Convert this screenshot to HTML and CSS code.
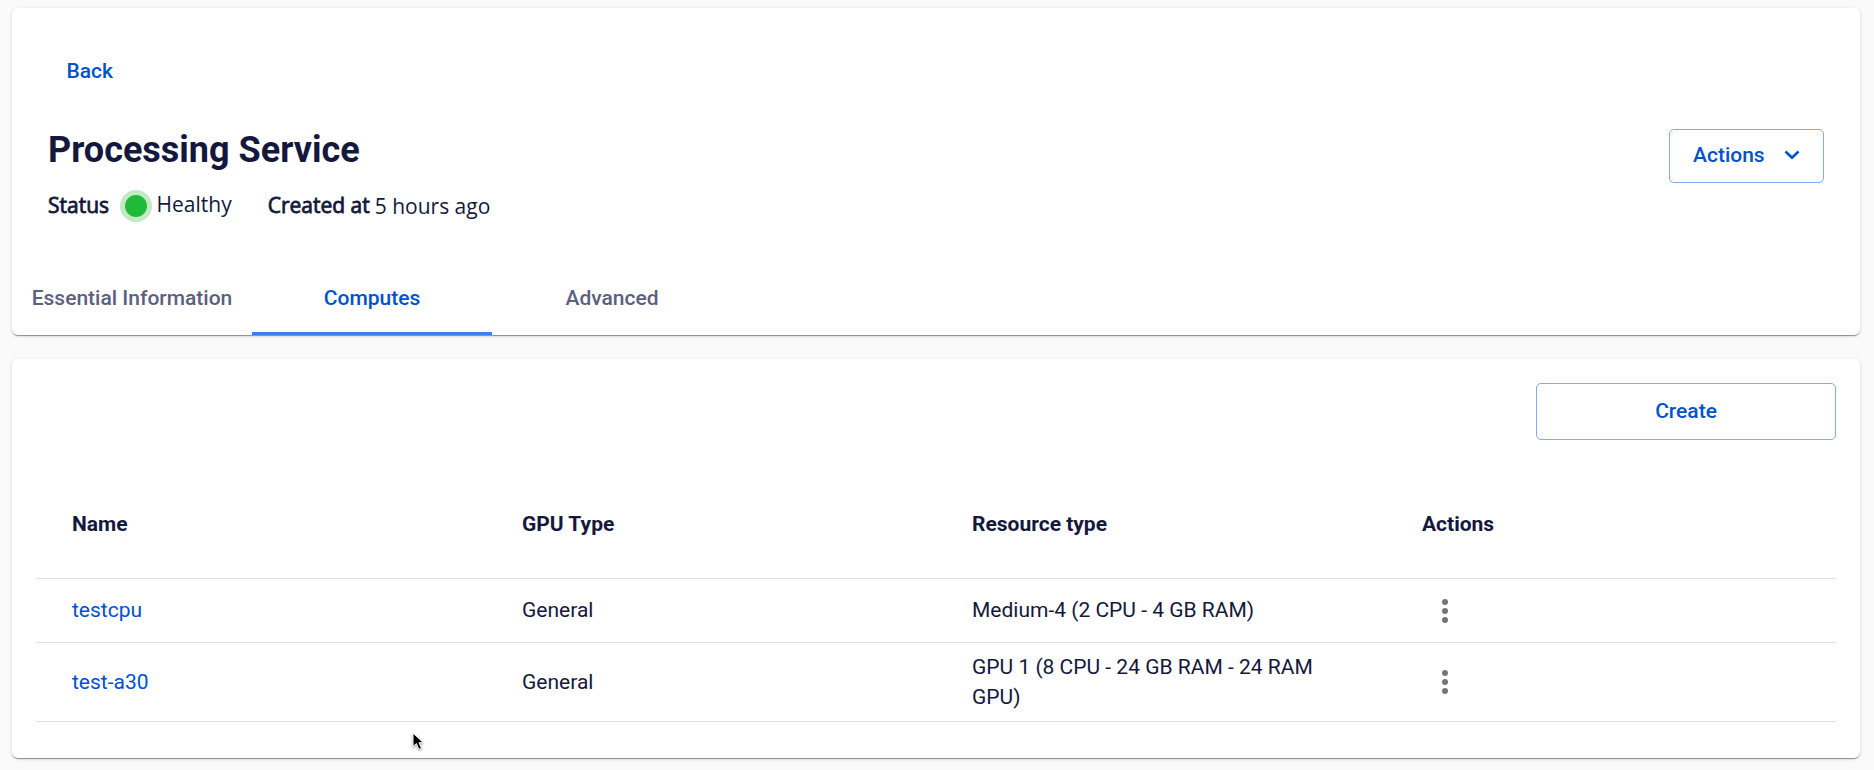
FILE: index.html
```html
<!DOCTYPE html>
<html lang="en">

<head>
    <meta charset="UTF-8">
    <meta name="viewport" content="width=device-width, initial-scale=1.0">
    <title>Processing Service</title>
    <link rel="stylesheet" href="styles.css">
</head>

<body>
    <section class="card service">
        <a class="back" href="#">Back</a>
        <div class="service-head">
            <div class="service-info">
                <h1>Processing Service</h1>
                <div class="meta">
                    <span class="label">Status</span>
                    <span class="dot"></span>
                    <span class="health">Healthy</span>
                    <span class="label created">Created at</span>
                    <span class="time">5 hours ago</span>
                </div>
            </div>
            <button class="btn actions-btn">
                Actions
                <svg width="16" height="10" viewBox="0 0 16 10">
                    <path d="M1.5 1.5 L8 7.7 L14.5 1.5" fill="none" stroke="#0052cc" stroke-width="2.6" />
                </svg>
            </button>
        </div>
        <nav class="tabs">
            <a class="tab" href="#">Essential Information</a>
            <a class="tab active" href="#">Computes</a>
            <a class="tab" href="#">Advanced</a>
        </nav>
    </section>

    <section class="card computes">
        <button class="btn create-btn">Create</button>
        <table>
            <thead>
                <tr>
                    <th>Name</th>
                    <th>GPU Type</th>
                    <th>Resource type</th>
                    <th>Actions</th>
                </tr>
            </thead>
            <tbody>
                <tr class="row-single">
                    <td><a href="#">testcpu</a></td>
                    <td>General</td>
                    <td>Medium-4 (2 CPU - 4 GB RAM)</td>
                    <td class="menu">
                        <svg class="more" width="6" height="24" viewBox="0 0 6 24">
                            <circle cx="3" cy="3" r="3" />
                            <circle cx="3" cy="12" r="3" />
                            <circle cx="3" cy="21" r="3" />
                        </svg>
                    </td>
                </tr>
                <tr class="row-double">
                    <td><a href="#">test-a30</a></td>
                    <td>General</td>
                    <td>GPU 1 (8 CPU - 24 GB RAM - 24 RAM GPU)</td>
                    <td class="menu">
                        <svg class="more" width="6" height="24" viewBox="0 0 6 24">
                            <circle cx="3" cy="3" r="3" />
                            <circle cx="3" cy="12" r="3" />
                            <circle cx="3" cy="21" r="3" />
                        </svg>
                    </td>
                </tr>
            </tbody>
        </table>
    </section>

    <svg class="cursor" width="14" height="20" viewBox="0 0 14 20">
        <path d="M1 1 L1 14.5 L4.4 11.6 L6.9 17.4 L9.5 16.3 L7 10.7 L11.3 10.7 Z" fill="#000" stroke="#fff" stroke-width="1" />
    </svg>
</body>

</html>
```

FILE: styles.css
```css
* {
    box-sizing: border-box;
}

body {
    margin: 0;
    padding: 8px 14px 0 12px;
    height: 770px;
    overflow: hidden;
    background-color: #fafafa;
    color: #14183c;
    font-family: Roboto, "Liberation Sans", sans-serif;
    font-size: 21px;
    line-height: 30px;
}

a {
    color: #0052cc;
    text-decoration: none;
}

.card {
    background-color: #fff;
    border-radius: 6px;
    box-shadow: 0 2px 1px -1px rgba(0, 0, 0, 0.24), 0 1px 1px 0 rgba(0, 0, 0, 0.2), 0 1px 4px 0 rgba(0, 0, 0, 0.12);
}

.service {
    height: 327px;
    margin-bottom: 24px;
    display: flex;
    flex-direction: column;
}

.back {
    margin: 48px 0 0 54.5px;
    font-weight: 500;
}

.service-head {
    display: flex;
    justify-content: space-between;
    padding: 43px 36px 0;
}

h1 {
    margin: 0;
    font-size: 36px;
    line-height: 42px;
    font-weight: 700;
}

.meta {
    display: flex;
    align-items: center;
    height: 32px;
    margin-top: 19px;
    font-family: "Open Sans", sans-serif;
}

.label {
    margin-bottom: 2px;
    -webkit-text-stroke: 0.8px #14183c;
}

.dot {
    width: 32px;
    height: 32px;
    margin: 0 5px 0 10.5px;
    border: 5px solid #c3eac5;
    border-radius: 50%;
    background-color: #1fba37;
}

.health {
    margin-bottom: 4px;
}

.created {
    margin-left: 36px;
    margin-right: 5px;
}

.btn {
    background-color: #fff;
    border: 1px solid #85a8e6;
    border-radius: 5px;
    color: #0052cc;
    font-family: inherit;
    font-size: 21px;
    font-weight: 500;
}

.actions-btn {
    display: flex;
    align-items: center;
    justify-content: space-between;
    width: 155px;
    height: 54px;
    padding: 0 23px 2px;
}

.tabs {
    display: flex;
    height: 75px;
    margin-top: auto;
}

.tab {
    width: 240px;
    padding-top: 23px;
    text-align: center;
    font-weight: 500;
    color: #5c6080;
}

.tab.active {
    color: #0052cc;
    border-bottom: 3px solid #3880f0;
}

.computes {
    height: 399px;
    padding: 24px;
}

.create-btn {
    display: block;
    width: 300px;
    height: 57px;
    margin-left: auto;
    padding-bottom: 3px;
}

table {
    width: 100%;
    margin-top: 30px;
    border-collapse: separate;
    border-spacing: 0;
    table-layout: fixed;
}

th,
td {
    padding: 0 36px;
    border-bottom: 1px solid #dfdfe0;
    text-align: left;
    vertical-align: middle;
}

th {
    height: 109px;
    font-weight: 700;
}

.row-single td {
    height: 64px;
    padding-bottom: 2px;
}

.row-double td {
    height: 79px;
}

.row-single .menu {
    padding-bottom: 0;
}

.more {
    display: block;
    margin-left: 20px;
    fill: #757575;
}

.cursor {
    position: absolute;
    left: 412px;
    top: 732px;
    filter: drop-shadow(0 1px 1px rgba(0, 0, 0, 0.4));
}
```
